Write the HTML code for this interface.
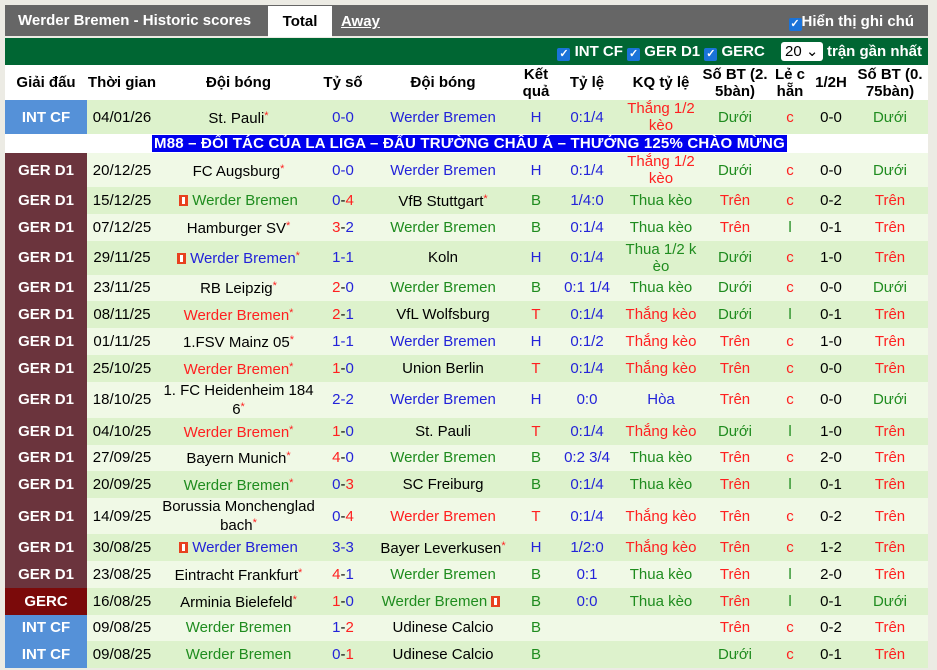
<!DOCTYPE html>
<html><head><meta charset="utf-8"><style>
body{margin:0;background:#ecebe4;font-family:"Liberation Sans",Arial,sans-serif;width:937px;height:670px;overflow:hidden;position:relative}
.top{position:absolute;left:5px;top:5px;width:923px;height:31px;background:#666;}
.top .t{position:absolute;left:13px;top:7px;color:#fff;font-weight:bold;font-size:15px}
.tab1{position:absolute;left:263px;top:1px;width:64px;height:31px;background:#fff;font-weight:bold;font-size:15px;text-align:center;line-height:31px}
.tab2{position:absolute;left:336px;top:8px;color:#fff;font-weight:bold;font-size:15px;text-decoration:underline}
.cb{display:inline-block;width:13px;height:13px;background:#1a73d9;border-radius:2px;color:#fff;font-size:11px;line-height:13px;text-align:center;vertical-align:-1px}
.note{position:absolute;right:14px;top:8px;color:#fff;font-weight:bold;font-size:15px}
.green{position:absolute;left:5px;top:38px;width:923px;height:27px;background:#006633;color:#fff;font-weight:bold;font-size:15px}
.green .f{position:absolute;right:6px;top:4px;white-space:nowrap}
.sel{display:inline-block;background:#fff;color:#000;border-radius:3px;width:42px;height:19px;font-weight:normal;text-align:left;padding-left:4px;box-sizing:border-box;line-height:19px;margin:0 4px 0 12px}
table{position:absolute;left:5px;top:65px;border-collapse:collapse;table-layout:fixed;width:923px;font-size:15px}
td,th{padding:0;text-align:center;line-height:17px;overflow:hidden}
th{background:#fff;height:35px;font-size:15px}
tr.a td{background:#ddf2cc}
tr.b td{background:#f0f9e6}
tr td{height:26.8px}
tr.tall td{height:34px}
td.lg{color:#fff;font-weight:bold;font-size:15px}
.ic{background:#5591d8!important}.gd{background:#6b343d!important}.gc{background:#7b0a0a!important}
.bl{color:#2323d9}.gr{color:#1f8c1f}.rd{color:#ff2020}
.s{color:#ff2020;font-size:11px;vertical-align:4px}
.fl{display:inline-block;width:9px;height:11px;background:#e8411f;border:1px solid #e8411f;position:relative;vertical-align:-1px;margin-right:4px;box-sizing:border-box}
.fl:after{content:"";position:absolute;left:2px;top:1px;width:3px;height:7px;background:#fff}
.ban td{height:19px;background:#fff}
.ban span{background:#0000ee;color:#fff;font-weight:bold;font-size:15px;padding:0 2px;letter-spacing:.2px}
</style></head><body>
<div class="top"><span class="t">Werder Bremen - Historic scores</span><div class="tab1">Total</div><span class="tab2">Away</span><span class="note"><span class="cb">✓</span>Hiển thị ghi chú</span></div>
<div class="green"><div class="f"><span class="cb">✓</span> INT CF <span class="cb">✓</span> GER D1 <span class="cb">✓</span> GERC <span class="sel">20 ⌄</span>trận gần nhất</div></div>
<table>
<colgroup><col style="width:82px"><col style="width:70px"><col style="width:163px"><col style="width:46px"><col style="width:154px"><col style="width:32px"><col style="width:70px"><col style="width:78px"><col style="width:70px"><col style="width:40px"><col style="width:42px"><col style="width:76px"></colgroup>
<tr><th>Giải đấu</th><th style="white-space:nowrap">Thời gian</th><th>Đội bóng</th><th>Tỷ số</th><th>Đội bóng</th><th>Kết quả</th><th>Tỷ lệ</th><th>KQ tỷ lệ</th><th>Số BT (2.<br>5bàn)</th><th>Lẻ c hẵn</th><th>1/2H</th><th>Số BT (0.<br>75bàn)</th></tr>
<tr class="a tall"><td class="lg ic">INT CF</td><td>04/01/26</td><td>St. Pauli<span class="s">*</span></td><td class="bl">0-0</td><td class="bl">Werder Bremen</td><td class="bl">H</td><td class="bl">0:1/4</td><td class="rd">Thắng 1/2<br>kèo</td><td class="gr">Dưới</td><td class="rd">c</td><td>0-0</td><td class="gr">Dưới</td></tr>
<tr class="ban"><td></td><td colspan="11" style="text-align:left"><span style="margin-left:65px">M88 – ĐỐI TÁC CỦA LA LIGA – ĐẤU TRƯỜNG CHÂU Á – THƯỞNG 125% CHÀO MỪNG</span></td></tr>
<tr class="b tall"><td class="lg gd">GER D1</td><td>20/12/25</td><td>FC Augsburg<span class="s">*</span></td><td class="bl">0-0</td><td class="bl">Werder Bremen</td><td class="bl">H</td><td class="bl">0:1/4</td><td class="rd">Thắng 1/2<br>kèo</td><td class="gr">Dưới</td><td class="rd">c</td><td>0-0</td><td class="gr">Dưới</td></tr>
<tr class="a"><td class="lg gd">GER D1</td><td>15/12/25</td><td class="gr"><span class="fl"></span>Werder Bremen</td><td><span class="bl">0</span>-<span class="rd">4</span></td><td>VfB Stuttgart<span class="s">*</span></td><td class="gr">B</td><td class="bl">1/4:0</td><td class="gr">Thua kèo</td><td class="rd">Trên</td><td class="rd">c</td><td>0-2</td><td class="rd">Trên</td></tr>
<tr class="b"><td class="lg gd">GER D1</td><td>07/12/25</td><td>Hamburger SV<span class="s">*</span></td><td><span class="rd">3</span>-<span class="bl">2</span></td><td class="gr">Werder Bremen</td><td class="gr">B</td><td class="bl">0:1/4</td><td class="gr">Thua kèo</td><td class="rd">Trên</td><td class="gr">l</td><td>0-1</td><td class="rd">Trên</td></tr>
<tr class="a tall"><td class="lg gd">GER D1</td><td>29/11/25</td><td class="bl"><span class="fl"></span>Werder Bremen<span class="s">*</span></td><td class="bl">1-1</td><td>Koln</td><td class="bl">H</td><td class="bl">0:1/4</td><td class="gr">Thua 1/2 k<br>èo</td><td class="gr">Dưới</td><td class="rd">c</td><td>1-0</td><td class="rd">Trên</td></tr>
<tr class="b"><td class="lg gd">GER D1</td><td>23/11/25</td><td>RB Leipzig<span class="s">*</span></td><td><span class="rd">2</span>-<span class="bl">0</span></td><td class="gr">Werder Bremen</td><td class="gr">B</td><td class="bl">0:1 1/4</td><td class="gr">Thua kèo</td><td class="gr">Dưới</td><td class="rd">c</td><td>0-0</td><td class="gr">Dưới</td></tr>
<tr class="a"><td class="lg gd">GER D1</td><td>08/11/25</td><td class="rd">Werder Bremen<span class="s">*</span></td><td><span class="rd">2</span>-<span class="bl">1</span></td><td>VfL Wolfsburg</td><td class="rd">T</td><td class="bl">0:1/4</td><td class="rd">Thắng kèo</td><td class="gr">Dưới</td><td class="gr">l</td><td>0-1</td><td class="rd">Trên</td></tr>
<tr class="b"><td class="lg gd">GER D1</td><td>01/11/25</td><td>1.FSV Mainz 05<span class="s">*</span></td><td class="bl">1-1</td><td class="bl">Werder Bremen</td><td class="bl">H</td><td class="bl">0:1/2</td><td class="rd">Thắng kèo</td><td class="rd">Trên</td><td class="rd">c</td><td>1-0</td><td class="rd">Trên</td></tr>
<tr class="a"><td class="lg gd">GER D1</td><td>25/10/25</td><td class="rd">Werder Bremen<span class="s">*</span></td><td><span class="rd">1</span>-<span class="bl">0</span></td><td>Union Berlin</td><td class="rd">T</td><td class="bl">0:1/4</td><td class="rd">Thắng kèo</td><td class="rd">Trên</td><td class="rd">c</td><td>0-0</td><td class="rd">Trên</td></tr>
<tr class="b tall"><td class="lg gd">GER D1</td><td>18/10/25</td><td>1. FC Heidenheim 184<br>6<span class="s">*</span></td><td class="bl">2-2</td><td class="bl">Werder Bremen</td><td class="bl">H</td><td class="bl">0:0</td><td class="bl">Hòa</td><td class="rd">Trên</td><td class="rd">c</td><td>0-0</td><td class="gr">Dưới</td></tr>
<tr class="a"><td class="lg gd">GER D1</td><td>04/10/25</td><td class="rd">Werder Bremen<span class="s">*</span></td><td><span class="rd">1</span>-<span class="bl">0</span></td><td>St. Pauli</td><td class="rd">T</td><td class="bl">0:1/4</td><td class="rd">Thắng kèo</td><td class="gr">Dưới</td><td class="gr">l</td><td>1-0</td><td class="rd">Trên</td></tr>
<tr class="b"><td class="lg gd">GER D1</td><td>27/09/25</td><td>Bayern Munich<span class="s">*</span></td><td><span class="rd">4</span>-<span class="bl">0</span></td><td class="gr">Werder Bremen</td><td class="gr">B</td><td class="bl">0:2 3/4</td><td class="gr">Thua kèo</td><td class="rd">Trên</td><td class="rd">c</td><td>2-0</td><td class="rd">Trên</td></tr>
<tr class="a"><td class="lg gd">GER D1</td><td>20/09/25</td><td class="gr">Werder Bremen<span class="s">*</span></td><td><span class="bl">0</span>-<span class="rd">3</span></td><td>SC Freiburg</td><td class="gr">B</td><td class="bl">0:1/4</td><td class="gr">Thua kèo</td><td class="rd">Trên</td><td class="gr">l</td><td>0-1</td><td class="rd">Trên</td></tr>
<tr class="b tall"><td class="lg gd">GER D1</td><td>14/09/25</td><td>Borussia Monchenglad<br>bach<span class="s">*</span></td><td><span class="bl">0</span>-<span class="rd">4</span></td><td class="rd">Werder Bremen</td><td class="rd">T</td><td class="bl">0:1/4</td><td class="rd">Thắng kèo</td><td class="rd">Trên</td><td class="rd">c</td><td>0-2</td><td class="rd">Trên</td></tr>
<tr class="a"><td class="lg gd">GER D1</td><td>30/08/25</td><td class="bl"><span class="fl"></span>Werder Bremen</td><td class="bl">3-3</td><td>Bayer Leverkusen<span class="s">*</span></td><td class="bl">H</td><td class="bl">1/2:0</td><td class="rd">Thắng kèo</td><td class="rd">Trên</td><td class="rd">c</td><td>1-2</td><td class="rd">Trên</td></tr>
<tr class="b"><td class="lg gd">GER D1</td><td>23/08/25</td><td>Eintracht Frankfurt<span class="s">*</span></td><td><span class="rd">4</span>-<span class="bl">1</span></td><td class="gr">Werder Bremen</td><td class="gr">B</td><td class="bl">0:1</td><td class="gr">Thua kèo</td><td class="rd">Trên</td><td class="gr">l</td><td>2-0</td><td class="rd">Trên</td></tr>
<tr class="a"><td class="lg gc">GERC</td><td>16/08/25</td><td>Arminia Bielefeld<span class="s">*</span></td><td><span class="rd">1</span>-<span class="bl">0</span></td><td class="gr">Werder Bremen <span class="fl"></span></td><td class="gr">B</td><td class="bl">0:0</td><td class="gr">Thua kèo</td><td class="rd">Trên</td><td class="gr">l</td><td>0-1</td><td class="gr">Dưới</td></tr>
<tr class="b"><td class="lg ic">INT CF</td><td>09/08/25</td><td class="gr">Werder Bremen</td><td><span class="bl">1</span>-<span class="rd">2</span></td><td>Udinese Calcio</td><td class="gr">B</td><td></td><td></td><td class="rd">Trên</td><td class="rd">c</td><td>0-2</td><td class="rd">Trên</td></tr>
<tr class="a"><td class="lg ic">INT CF</td><td>09/08/25</td><td class="gr">Werder Bremen</td><td><span class="bl">0</span>-<span class="rd">1</span></td><td>Udinese Calcio</td><td class="gr">B</td><td></td><td></td><td class="gr">Dưới</td><td class="rd">c</td><td>0-1</td><td class="rd">Trên</td></tr>
</table>
</body></html>
